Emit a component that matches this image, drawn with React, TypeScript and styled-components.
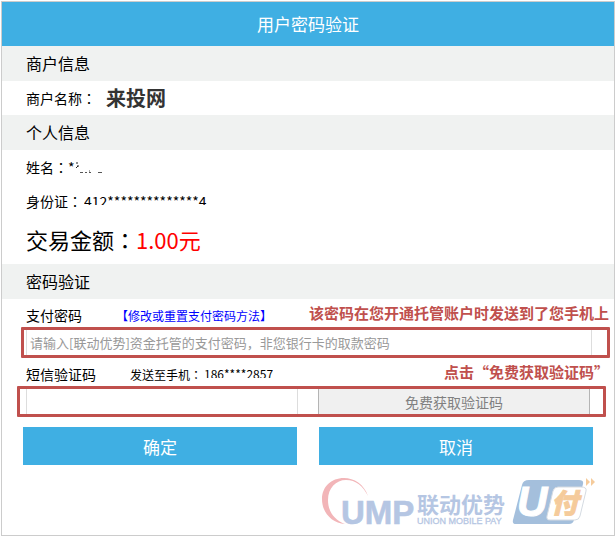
import React from "react";
import styled, { createGlobalStyle } from "styled-components";

const sans = '"Noto Sans CJK SC", "Noto Sans", sans-serif';
const blue = "#3fafe3";
const alert = "#c0504d";

const GlobalStyle = createGlobalStyle`
  *, *::before, *::after { box-sizing: border-box; }
  body { margin: 0; background: #fff; color: #000; font-family: ${sans}; font-size: 14px; }
  button, input { font-family: inherit; margin: 0; }
`;

const Frame = styled.main`
  margin: 1px;
  border: 1px solid #ccc;
  background: #fff;
`;

const Header = styled.h1`
  margin: 0;
  font-size: 17px;
  font-weight: 400;
  line-height: 44px;
  text-align: center;
  color: #fff;
  background: ${blue};
`;

const SectionTitle = styled.h2`
  margin: 0;
  padding: 0 24px;
  font-size: 16px;
  font-weight: 400;
  line-height: 35px;
  background: #f0f2f1;
`;

const Row = styled.div<{ $large?: boolean }>`
  display: flex;
  align-items: center;
  padding: ${(p) => (p.$large ? "0 24px 4px" : "0 24px")};
  font-size: ${(p) => (p.$large ? 22 : 14)}px;
  height: ${(p) => (p.$large ? 46 : 34)}px;
`;

const ColonMark = styled.span`
  font-family: "Noto Sans CJK TC", sans-serif;
`;
const Colon = () => <ColonMark lang="zh-TW">：</ColonMark>;

const Merchant = styled.strong`
  margin-left: 10px;
  font-size: 20px;
  line-height: 24px;
  color: #333;
`;

const Amount = styled.span`
  color: #f00;
`;

const Masked = styled.span`
  display: inline-block;
  margin-left: 2px;
  line-height: 20px;
  clip-path: inset(0 0 6px 0);
`;

const FieldLine = styled.div`
  display: flex;
  justify-content: space-between;
  align-items: center;
  height: 28px;
  padding: 0 5px 0 24px;
`;

const FieldHead = styled.div`
  display: flex;
  align-items: center;
  padding-top: 4px;
`;

const Label = styled.label`
  font-size: 14px;
`;

const ResetLink = styled.a`
  margin-left: 34px;
  font-size: 12px;
  color: #00f;
  text-decoration: none;
`;

const SentTo = styled.span`
  display: flex;
  align-items: center;
  margin-left: 34px;
  font-size: 12px;
`;

const Note = styled.span`
  font-size: 15px;
  font-weight: 700;
  line-height: 24px;
  color: ${alert};
`;

const PasswordBox = styled.div`
  margin: 0 4px 0 19px;
  padding: 0 15px 0 2px;
  border: 3px solid ${alert};
  border-radius: 1px;
`;

const CodeBox = styled.div`
  display: grid;
  grid-template-columns: 1fr 1fr;
  gap: 20px;
  margin: 0 8px 0 15px;
  padding: 0 13px 0 6px;
  border: 3px solid ${alert};
  border-radius: 1px;
`;

const Input = styled.input`
  display: block;
  width: 100%;
  min-width: 0;
  height: 25px;
  padding: 0 3px;
  border: solid #ddd;
  border-width: 0 1px;
  border-radius: 0;
  outline: none;
  background: #fff;
  font-size: 13px;
  &::placeholder { color: #999; opacity: 1; }
`;

const CodeButton = styled.button`
  height: 25px;
  padding: 0;
  border: solid #b4b4b4;
  border-width: 0 1px;
  background: #f0f0f0;
  color: #808080;
  font-size: 14px;
  line-height: 24px;
`;

const Actions = styled.div`
  display: grid;
  grid-template-columns: 1fr 1fr;
  gap: 22px;
  padding: 10px 21px 0;
`;

const ActionButton = styled.button`
  height: 38px;
  padding: 0;
  border: 0;
  background: ${blue};
  color: #fff;
  font-size: 17px;
`;

const Footer = styled.footer`
  display: flex;
  justify-content: flex-end;
  padding: 11px 16px 0;
`;

const LogoArt = styled.svg`
  display: block;
`;

const NameRemnant = () => (
  <svg width="28" height="14" viewBox="0 0 28 14" aria-hidden="true">
    <path d="M2 2v2M3 5v2M1 8l2-2" stroke="#222" fill="none" />
    <path d="M5 12.5h3M10 12.5h2M14 12.5h2M23 12.5h4M14 11h1" stroke="#555" fill="none" />
  </svg>
);

const Logos = () => (
  <LogoArt width="278" height="59" viewBox="320 476 278 59" role="img" aria-label="UMP U付">
    <path
      fill="#f2b5b8"
      d="M368 496C364 484 354 478 344 478C331 478 322 487 322 499C322 513 332 523 345 524C334 520 328 511 328 500C328 488 336 480 346 480C356 480 363 486 368 496Z"
    />
    <g fill="#b5c6e3" fontFamily="Liberation Sans, sans-serif">
      <text x="341" y="524" fontSize="33" fontWeight="700" stroke="#b5c6e3" strokeWidth="0.6">UMP</text>
      <text x="417" y="524" fontSize="9" stroke="#b5c6e3" strokeWidth="0.3">UNION MOBILE PAY</text>
      <text x="417" y="513" fontSize="22" fontWeight="700" fontFamily="Noto Sans CJK SC, sans-serif">联动优势</text>
    </g>
    <path fill="#a4bfdc" d="M529 480H579Q584 480 583 484L574 520Q573 524 569 524H516Q512 524 513 520L522 485Q523 480 529 480Z" />
    <path fill="#fff" stroke="#d5dbe2" d="M558 487H581Q587 487 586 491L580 516Q579 520 575 520H550Q546 520 547 516L553 491Q554 487 558 487Z" />
    <text x="517" y="516" fontSize="42" fontWeight="700" fontStyle="italic" fill="#fff" stroke="#fff" fontFamily="Liberation Sans, sans-serif">U</text>
    <text x="551" y="513" fontSize="27" fontWeight="900" fontStyle="italic" fill="#f5cb9b" stroke="#f5cb9b" fontFamily="Noto Sans CJK SC, sans-serif">付</text>
    <path fill="#f5cb9b" d="M586 478L590 482L586 486ZM591 478L595 482L591 486Z" />
  </LogoArt>
);

export default function App() {
  return (
    <>
      <GlobalStyle />
      <Frame>
        <Header>用户密码验证</Header>

        <SectionTitle>商户信息</SectionTitle>
        <Row>
          商户名称<Colon />
          <Merchant>来投网</Merchant>
        </Row>

        <SectionTitle>个人信息</SectionTitle>
        <Row>
          姓名<Colon />*<NameRemnant />
        </Row>
        <Row>
          身份证<Colon />
          <Masked>412**************4</Masked>
        </Row>
        <Row $large>
          交易金额<Colon />
          <Amount>1.00元</Amount>
        </Row>

        <SectionTitle>密码验证</SectionTitle>
        <form onSubmit={(e) => e.preventDefault()}>
          <FieldLine>
            <FieldHead>
              <Label htmlFor="password">支付密码</Label>
              <ResetLink href="#reset">【修改或重置支付密码方法】</ResetLink>
            </FieldHead>
            <Note>该密码在您开通托管账户时发送到了您手机上</Note>
          </FieldLine>
          <PasswordBox>
            <Input
              id="password"
              type="password"
              placeholder="请输入[联动优势]资金托管的支付密码，非您银行卡的取款密码"
            />
          </PasswordBox>

          <FieldLine>
            <FieldHead>
              <Label htmlFor="code">短信验证码</Label>
              <SentTo>
                发送至手机<Colon />
                <Masked>186****2857</Masked>
              </SentTo>
            </FieldHead>
            <Note>点击“免费获取验证码”</Note>
          </FieldLine>
          <CodeBox>
            <Input id="code" type="text" />
            <CodeButton type="button">免费获取验证码</CodeButton>
          </CodeBox>

          <Actions>
            <ActionButton type="submit">确定</ActionButton>
            <ActionButton type="button">取消</ActionButton>
          </Actions>
        </form>

        <Footer>
          <Logos />
        </Footer>
      </Frame>
    </>
  );
}
